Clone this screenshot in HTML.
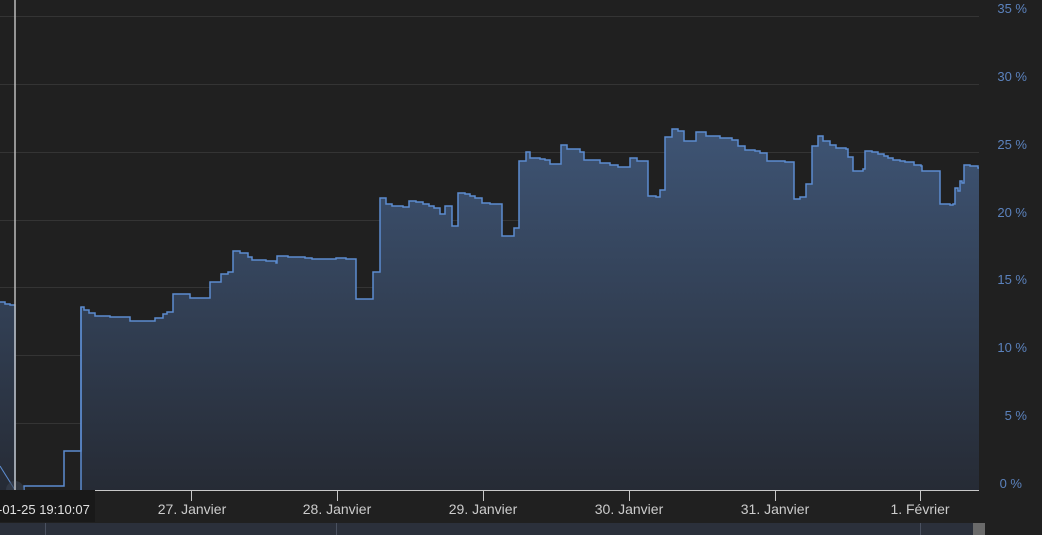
<!DOCTYPE html>
<html><head><meta charset="utf-8"><style>
html,body{margin:0;padding:0;background:#202020;}
svg{display:block}
text{font-family:"Liberation Sans",sans-serif;}
</style></head><body>
<svg width="1042" height="535" viewBox="0 0 1042 535" xmlns="http://www.w3.org/2000/svg">
<defs>
<linearGradient id="g" x1="0" y1="130" x2="0" y2="490" gradientUnits="userSpaceOnUse">
<stop offset="0" stop-color="#3e5474"/>
<stop offset="1" stop-color="#262b35"/>
</linearGradient>
</defs>
<rect width="1042" height="535" fill="#202020"/>
<g stroke="#343434" stroke-width="1">
<line x1="0" y1="16.5" x2="979" y2="16.5"/>
<line x1="0" y1="84.5" x2="979" y2="84.5"/>
<line x1="0" y1="152.5" x2="979" y2="152.5"/>
<line x1="0" y1="220.5" x2="979" y2="220.5"/>
<line x1="0" y1="287.5" x2="979" y2="287.5"/>
<line x1="0" y1="355.5" x2="979" y2="355.5"/>
<line x1="0" y1="423.5" x2="979" y2="423.5"/>
</g>
<path d="M0,302 H5 V304 H10 V305 H15 V490 H0 Z" fill="url(#g)"/>
<path d="M81,307 H84 V310 H89 V313 H95 V316 H110 V317 H130 V321 H155 V318 H163 V314 H167 V312 H173 V294 H190 V298 H210 V282 H221 V274 H228 V272 H233 V251 H240 V253 H248 V257 H252 V260 H266 V261 H276 V263 H277 V256 H288 V257 H305 V258 H312 V259 H336 V258 H346 V259 H356 V299 H373 V272 H380 V198 H386 V204 H392 V206 H403 V207 H409 V201 H416 V202 H423 V204 H429 V206 H434 V208 H440 V214 H445 V206 H452 V226 H458 V193 H465 V194 H470 V196 H475 V198 H482 V203 H490 V204 H502 V236 H514 V228 H519 V161 H526 V152 H530 V158 H540 V159 H545 V160 H550 V164 H561 V145 H567 V149 H580 V152 H584 V160 H600 V163 H610 V165 H618 V167 H630 V158 H637 V161 H648 V196 H656 V197 H660 V190 H665 V137 H672 V129 H678 V131 H684 V141 H695 V141 H696 V132 H706 V136 H720 V138 H732 V140 H738 V146 H745 V150 H755 V151 H760 V153 H767 V161 H776 V161 H785 V162 H794 V199 H800 V197 H806 V184 H812 V146 H818 V136 H823 V141 H830 V145 H836 V148 H846 V149 H848 V157 H853 V171 H863 V169 H865 V151 H872 V152 H878 V154 H884 V156 H888 V158 H893 V160 H900 V161 H905 V162 H914 V165 H921 V166 H922 V171 H940 V204 H950 V205 H953 V204 H955 V188 H958 V191 H960 V181 H962 V183 H964 V165 H970 V166 H978 V168 H979 V490 H81 Z" fill="url(#g)"/>
<path d="M81,490 V307 H84 V310 H89 V313 H95 V316 H110 V317 H130 V321 H155 V318 H163 V314 H167 V312 H173 V294 H190 V298 H210 V282 H221 V274 H228 V272 H233 V251 H240 V253 H248 V257 H252 V260 H266 V261 H276 V263 H277 V256 H288 V257 H305 V258 H312 V259 H336 V258 H346 V259 H356 V299 H373 V272 H380 V198 H386 V204 H392 V206 H403 V207 H409 V201 H416 V202 H423 V204 H429 V206 H434 V208 H440 V214 H445 V206 H452 V226 H458 V193 H465 V194 H470 V196 H475 V198 H482 V203 H490 V204 H502 V236 H514 V228 H519 V161 H526 V152 H530 V158 H540 V159 H545 V160 H550 V164 H561 V145 H567 V149 H580 V152 H584 V160 H600 V163 H610 V165 H618 V167 H630 V158 H637 V161 H648 V196 H656 V197 H660 V190 H665 V137 H672 V129 H678 V131 H684 V141 H695 V141 H696 V132 H706 V136 H720 V138 H732 V140 H738 V146 H745 V150 H755 V151 H760 V153 H767 V161 H776 V161 H785 V162 H794 V199 H800 V197 H806 V184 H812 V146 H818 V136 H823 V141 H830 V145 H836 V148 H846 V149 H848 V157 H853 V171 H863 V169 H865 V151 H872 V152 H878 V154 H884 V156 H888 V158 H893 V160 H900 V161 H905 V162 H914 V165 H921 V166 H922 V171 H940 V204 H950 V205 H953 V204 H955 V188 H958 V191 H960 V181 H962 V183 H964 V165 H970 V166 H978 V168 H979" fill="none" stroke="#5c8cd0" stroke-width="1.5"/>
<path d="M0,302 H5 V304 H10 V305 H15 V490" fill="none" stroke="#5c8cd0" stroke-width="1.5"/>
<path d="M24,490 V486 H64 V451 H81 V307" fill="none" stroke="#5c8cd0" stroke-width="1.5"/>
<line x1="0" y1="466" x2="15" y2="490" stroke="#5c8cd0" stroke-width="1"/>
<circle cx="15" cy="490" r="9" fill="#3a4250" opacity="0.6"/>
<line x1="15" y1="0" x2="15" y2="490" stroke="#bbbbbb" stroke-width="1.5"/>
<line x1="0" y1="490.5" x2="979" y2="490.5" stroke="#c8c8c8" stroke-width="1"/>
<g stroke="#c8c8c8" stroke-width="1">
<line x1="191.5" y1="490" x2="191.5" y2="501"/>
<line x1="337.5" y1="490" x2="337.5" y2="501"/>
<line x1="483.5" y1="490" x2="483.5" y2="501"/>
<line x1="629.5" y1="490" x2="629.5" y2="501"/>
<line x1="775.5" y1="490" x2="775.5" y2="501"/>
<line x1="920.5" y1="490" x2="920.5" y2="501"/>
</g>
<g fill="#cccccc" font-size="14" text-anchor="middle">
<text x="192" y="514">27. Janvier</text>
<text x="337" y="514">28. Janvier</text>
<text x="483" y="514">29. Janvier</text>
<text x="629" y="514">30. Janvier</text>
<text x="775" y="514">31. Janvier</text>
<text x="920" y="514">1. Février</text>
</g>
<g fill="#5b82bd" font-size="13" text-anchor="end">
<text x="1027" y="13">35 %</text>
<text x="1027" y="81">30 %</text>
<text x="1027" y="149">25 %</text>
<text x="1027" y="217">20 %</text>
<text x="1027" y="284">15 %</text>
<text x="1027" y="352">10 %</text>
<text x="1027" y="420">5 %</text>
<text x="1022" y="488">0 %</text>
</g>
<rect x="0" y="523" width="979" height="12" fill="#2b303b"/>
<line x1="45.5" y1="523" x2="45.5" y2="535" stroke="#4a5160"/>
<line x1="336.5" y1="523" x2="336.5" y2="535" stroke="#4a5160"/>
<line x1="920.5" y1="523" x2="920.5" y2="535" stroke="#4a5160"/>
<rect x="973" y="523" width="12" height="12" fill="#6a6a6a"/>
<rect x="0" y="490" width="95" height="32" fill="#191919"/>
<text x="-2" y="514" fill="#e0e0e0" font-size="13">-01-25 19:10:07</text>
</svg>
</body></html>
